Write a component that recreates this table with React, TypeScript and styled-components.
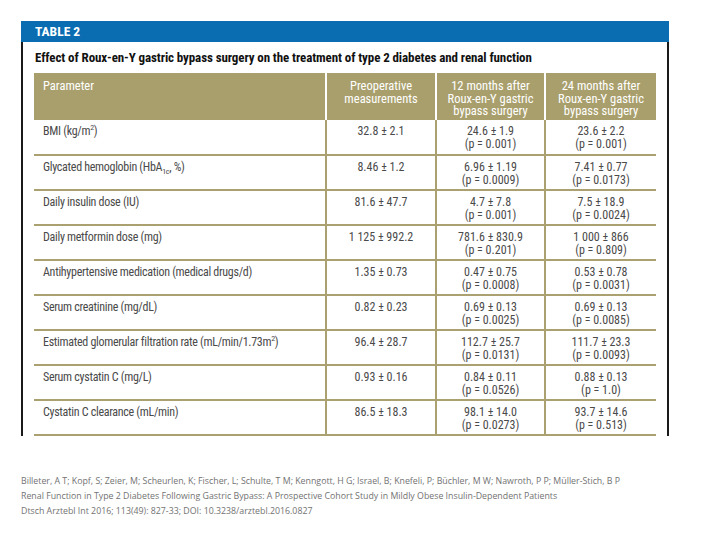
import React from "react";
import styled, { createGlobalStyle } from "styled-components";

const GlobalStyle = createGlobalStyle`
  body {
    margin: 0;
    background: #ffffff;
  }
`;

const Page = styled.div`
  padding: 21px 0 0 21px;
  width: 720px;
  height: 540px;
  box-sizing: border-box;
`;

const Figure = styled.div`
  width: 648px;
  font-family: Roboto, "Liberation Sans", sans-serif;
  font-stretch: 75%;
`;

const TitleBar = styled.div`
  height: 21px;
  background: #0a6db2;
  color: #ffffff;
  font-weight: bold;
  font-size: 13.5px;
  line-height: 21px;
  padding-left: 14px;
`;

const Body = styled.div`
  border-left: 2px solid #1a1a1a;
  border-right: 2px solid #1a1a1a;
  padding: 0 11px;
`;

const Subtitle = styled.div`
  height: 31px;
  line-height: 31px;
  font-weight: bold;
  font-size: 13px;
  letter-spacing: -0.1px;
  color: #111111;
  padding-left: 1px;
  white-space: nowrap;
`;

const Table = styled.table`
  width: 622px;
  border-collapse: collapse;
  table-layout: fixed;
`;

const HeadCell = styled.th<{ $left?: boolean; $w: number }>`
  width: ${(p) => p.$w}px;
  height: 47px;
  background: #a99f6d;
  color: #ffffff;
  font-weight: normal;
  font-size: 12.5px;
  line-height: 12.5px;
  text-align: ${(p) => (p.$left ? "left" : "center")};
  vertical-align: top;
  padding: 7px 2px 0 ${(p) => (p.$left ? 9 : 2)}px;
  border-left: 2px solid #ffffff;
  box-sizing: border-box;
  white-space: nowrap;

  &:first-child {
    border-left: none;
  }
`;

const Row = styled.tr`
  border-bottom: 2px solid #aba170;
`;

const Cell = styled.td<{ $left?: boolean }>`
  height: 35px;
  box-sizing: border-box;
  padding: 5px 2px 0 ${(p) => (p.$left ? 9 : 2)}px;
  vertical-align: top;
  text-align: ${(p) => (p.$left ? "left" : "center")};
  font-size: 12px;
  line-height: 13px;
  letter-spacing: ${(p) => (p.$left ? "-0.3px" : "0")};
  color: #4a4a4a;
  background: #ffffff;
  border-left: 2px solid #aba170;
  white-space: nowrap;

  &:first-child {
    border-left: none;
  }

  sup {
    font-size: 8px;
    line-height: 0;
  }

  sub {
    font-size: 8px;
    line-height: 0;
  }
`;

const Citation = styled.div`
  margin-top: 38px;
  font-family: "Open Sans", "Liberation Sans", sans-serif;
  font-size: 8.8px;
  line-height: 15px;
  color: #727272;
  white-space: nowrap;
`;

type RowData = {
  label: React.ReactNode;
  pre: string;
  m12: [string, string];
  m24: [string, string];
};

const rows: RowData[] = [
  {
    label: (
      <>
        BMI (kg/m<sup>2</sup>)
      </>
    ),
    pre: "32.8 ± 2.1",
    m12: ["24.6 ± 1.9", "(p = 0.001)"],
    m24: ["23.6 ± 2.2", "(p = 0.001)"],
  },
  {
    label: (
      <>
        Glycated hemoglobin (HbA<sub>1c</sub>, %)
      </>
    ),
    pre: "8.46 ± 1.2",
    m12: ["6.96 ± 1.19", "(p = 0.0009)"],
    m24: ["7.41 ± 0.77", "(p = 0.0173)"],
  },
  {
    label: "Daily insulin dose (IU)",
    pre: "81.6 ± 47.7",
    m12: ["4.7 ± 7.8", "(p = 0.001)"],
    m24: ["7.5 ± 18.9", "(p = 0.0024)"],
  },
  {
    label: "Daily metformin dose (mg)",
    pre: "1 125 ± 992.2",
    m12: ["781.6 ± 830.9", "(p = 0.201)"],
    m24: ["1 000 ± 866", "(p = 0.809)"],
  },
  {
    label: "Antihypertensive medication (medical drugs/d)",
    pre: "1.35 ± 0.73",
    m12: ["0.47 ± 0.75", "(p = 0.0008)"],
    m24: ["0.53 ± 0.78", "(p = 0.0031)"],
  },
  {
    label: "Serum creatinine (mg/dL)",
    pre: "0.82 ± 0.23",
    m12: ["0.69 ± 0.13", "(p = 0.0025)"],
    m24: ["0.69 ± 0.13", "(p = 0.0085)"],
  },
  {
    label: (
      <>
        Estimated glomerular filtration rate (mL/min/1.73m<sup>2</sup>)
      </>
    ),
    pre: "96.4 ± 28.7",
    m12: ["112.7 ± 25.7", "(p = 0.0131)"],
    m24: ["111.7 ± 23.3", "(p = 0.0093)"],
  },
  {
    label: "Serum cystatin C (mg/L)",
    pre: "0.93 ± 0.16",
    m12: ["0.84 ± 0.11", "(p = 0.0526)"],
    m24: ["0.88 ± 0.13", "(p = 1.0)"],
  },
  {
    label: "Cystatin C clearance (mL/min)",
    pre: "86.5 ± 18.3",
    m12: ["98.1 ± 14.0", "(p = 0.0273)"],
    m24: ["93.7 ± 14.6", "(p = 0.513)"],
  },
];

const App = () => (
  <Page>
    <GlobalStyle />
    <Figure>
      <TitleBar>TABLE 2</TitleBar>
      <Body>
        <Subtitle>
          Effect of Roux-en-Y gastric bypass surgery on the treatment of type 2
          diabetes and renal function
        </Subtitle>
        <Table>
          <thead>
            <tr>
              <HeadCell $left $w={292}>
                Parameter
              </HeadCell>
              <HeadCell $w={110}>
                Preoperative
                <br />
                measurements
              </HeadCell>
              <HeadCell $w={109}>
                12 months after
                <br />
                Roux-en-Y gastric
                <br />
                bypass surgery
              </HeadCell>
              <HeadCell $w={111}>
                24 months after
                <br />
                Roux-en-Y gastric
                <br />
                bypass surgery
              </HeadCell>
            </tr>
          </thead>
          <tbody>
            {rows.map((r, i) => (
              <Row key={i}>
                <Cell $left>{r.label}</Cell>
                <Cell>{r.pre}</Cell>
                <Cell>
                  {r.m12[0]}
                  <br />
                  {r.m12[1]}
                </Cell>
                <Cell>
                  {r.m24[0]}
                  <br />
                  {r.m24[1]}
                </Cell>
              </Row>
            ))}
          </tbody>
        </Table>
      </Body>
    </Figure>
    <Citation>
      Billeter, A T; Kopf, S; Zeier, M; Scheurlen, K; Fischer, L; Schulte, T M;
      Kenngott, H G; Israel, B; Knefeli, P; Büchler, M W; Nawroth, P P;
      Müller-Stich, B P
      <br />
      Renal Function in Type 2 Diabetes Following Gastric Bypass: A Prospective
      Cohort Study in Mildly Obese Insulin-Dependent Patients
      <br />
      Dtsch Arztebl Int 2016; 113(49): 827-33; DOI: 10.3238/arztebl.2016.0827
    </Citation>
  </Page>
);

export default App;
